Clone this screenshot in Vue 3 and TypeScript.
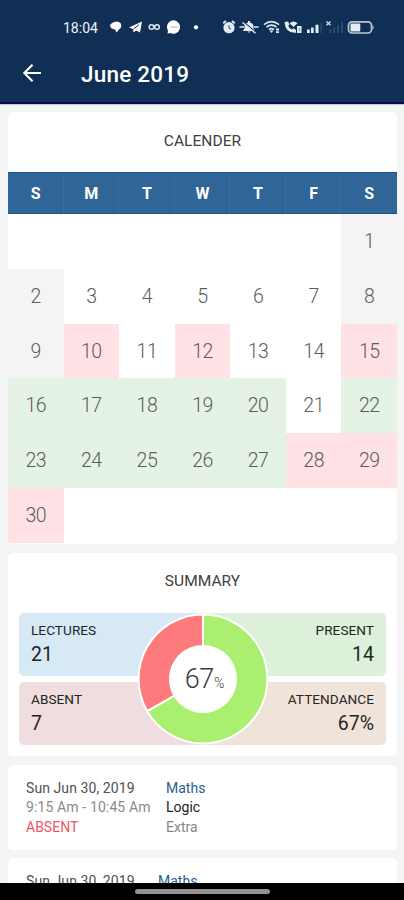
<script setup lang="ts">
type DayState = 'none' | 'muted' | 'absent' | 'present'

interface Day {
  key: string
  label: string
  state: DayState
}

interface LectureEntry {
  date: string
  time: string
  status: string
  subject: string
  topic: string
  kind: string
}

const weekdays: string[] = ['S', 'M', 'T', 'W', 'T', 'F', 'S']

const absentDays = new Set<number>([10, 12, 15, 28, 29, 30])
const presentDays = new Set<number>([16, 17, 18, 19, 20, 22, 23, 24, 25, 26, 27])
const mutedDays = new Set<number>([1, 2, 8, 9])

function stateOf(n: number): DayState {
  if (absentDays.has(n)) return 'absent'
  if (presentDays.has(n)) return 'present'
  return mutedDays.has(n) ? 'muted' : 'none'
}

const leadingBlanks = 6
const days: Day[] = Array.from({ length: leadingBlanks + 30 }, (_, i): Day => {
  const n = i - leadingBlanks + 1
  return n < 1
    ? { key: `blank-${i}`, label: '', state: 'none' }
    : { key: `day-${n}`, label: String(n), state: stateOf(n) }
})

const entries: LectureEntry[] = [
  { date: 'Sun Jun 30, 2019', time: '9:15 Am - 10:45 Am', status: 'ABSENT', subject: 'Maths', topic: 'Logic', kind: 'Extra' },
  { date: 'Sun Jun 30, 2019', time: '', status: '', subject: 'Maths', topic: '', kind: '' },
]
</script>

<template>
  <div class="screen">
    <header class="header">
      <div class="status">
        <span class="clock">18:04</span>
        <svg class="left-icons" width="92" height="18" viewBox="0 0 92 18" fill="#fff">
          <path d="M3 5 Q8 2 11.5 5 Q13.5 9 10.5 11 L7.5 14.5 L6 11.5 Q1 11 1 7 Z" />
          <path d="M20 9.5 L33 3.5 L31 14.5 L27 12.5 L24.5 14.5 L24 11 Z" />
          <path d="M24.5 11 L30 6.5" stroke="#0f3054" stroke-width="1" />
          <g fill="none" stroke="#dde7f2" stroke-width="1.5">
            <circle cx="42.5" cy="9" r="2.3" /><circle cx="48" cy="9" r="2.3" />
          </g>
          <path d="M65 2.2 A6.9 6.8 0 1 1 61 15 L58.5 15.5 L59 12.5 A6.9 6.8 0 0 1 65 2.2 Z" />
          <path d="M61.5 9.3 L64 8.7 L66 9.4 L69 8.8" stroke="#a9b8c8" fill="none" stroke-width="1" />
          <circle cx="87" cy="9.3" r="2.1" />
        </svg>
        <svg class="right-icons" width="154" height="18" viewBox="0 0 154 18" fill="#e4edf7">
          <circle cx="7" cy="9.7" r="5.6" />
          <path d="M1.2 5.3 L4 3 M10 3 L12.8 5.3" stroke="#e4edf7" stroke-width="1.9" />
          <path d="M7 7 V10 L9 11" fill="none" stroke="#3c5878" stroke-width="1.1" />
          <path d="M20.8 13 L22.5 10.5 V8 Q23 5 26 4.5 V3 H28 V4.5 Q31 5 31.5 8 V10.5 L33.2 13 Z M25.5 13.6 H28.6 Q27 15.7 25.5 13.6 Z" />
          <path d="M21.8 4.1 L33.8 14" stroke="#0f3054" stroke-width="1.2" />
          <path d="M20.5 4.5 L33.5 15.2 M17.5 9 H22 M32 9 H36.5" stroke="#e4edf7" stroke-width="1.4" />
          <g fill="none" stroke="#dce6f1" stroke-width="1.7">
            <path d="M42 6.7 Q49.5 .4 57 6.7" /><path d="M44.5 9.2 Q49.5 5.2 54.5 9.2" /><path d="M47 11.6 Q49.5 9.7 52 11.6" />
          </g>
          <path d="M47.5 12.5 L49.5 15 L51.5 12.5 Z M54 10.5 H57 V12.4 H54 Z M54 13.2 H57 V15 H54 Z" />
          <path d="M62.5 4 L66 3.5 L67.5 6.5 L66.2 8 Q67 10 70 11.5 L71.5 10.3 L74 12 V14.7 Q63.5 15.5 62.5 4 Z" />
          <path d="M67.5 5.3 Q71.5 1.8 75.5 5.3 L71.5 9 Z M75 8 H79.5 V15 H75 Z" />
          <path d="M76.7 9.7 H78 V13.3 H76.7 Z" fill="#8fa2b9" />
          <path d="M85 11.5 H87.7 V15 H85 Z M89 9.5 H91.7 V15 H89 Z M93.5 6.7 H96.5 V15 H93.5 Z" />
          <path d="M98.5 4 H100 V15 H98.5 Z M107 11.5 H109.3 V15 H107 Z M111 9.5 H113 V15 H111 Z M115 7 H117 V15 H115 Z M119 4 H121 V15 H119 Z" fill="#2a4a70" />
          <path d="M104.5 3.5 L108.5 7.3 M108.5 3.5 L104.5 7.3" stroke="#c8ddef" stroke-width="1.3" />
          <rect x="126.5" y="3.8" width="23" height="11.2" rx="3.6" fill="none" stroke="#b9c5d3" stroke-width="1.7" />
          <rect x="128.5" y="5.4" width="9.8" height="8" rx="1" />
          <path d="M150.5 7 Q153 9.3 150.5 12 Z" fill="#b9c5d3" />
        </svg>
      </div>
      <div class="title-bar">
        <svg class="back" width="20" height="20" viewBox="0 0 20 20" fill="none" stroke="#fff" stroke-width="2.1">
          <path d="M19 10 H2.6 M10.5 1.8 L2.3 10 L10.5 18.2" />
        </svg>
        <h1 class="title">June 2019</h1>
      </div>
    </header>

    <main class="content">
      <section class="card calendar">
        <h2 class="card-title">CALENDER</h2>
        <div class="weekdays">
          <span v-for="(name, i) in weekdays" :key="i" class="weekday">{{ name }}</span>
        </div>
        <div class="days">
          <span v-for="day in days" :key="day.key" class="day" :class="day.state">{{ day.label }}</span>
        </div>
      </section>

      <section class="card summary">
        <h2 class="card-title">SUMMARY</h2>
        <div class="tiles">
          <div class="tile lectures"><span class="tile-label">LECTURES</span><span class="tile-value">21</span></div>
          <div class="tile right presents"><span class="tile-label">PRESENT</span><span class="tile-value">14</span></div>
          <div class="tile absents"><span class="tile-label">ABSENT</span><span class="tile-value">7</span></div>
          <div class="tile right attendance"><span class="tile-label">ATTENDANCE</span><span class="tile-value">67%</span></div>
          <div class="donut">
            <svg width="132" height="132" viewBox="-66 -66 132 132">
              <circle r="33" fill="#fff" />
              <path d="M0 -64.4 A64.4 64.4 0 1 1 -55.8 32.2 L-28.6 16.5 A33 33 0 1 0 0 -33 Z" fill="#aaef70" stroke="#fff" stroke-width="2" />
              <path d="M-55.8 32.2 A64.4 64.4 0 0 1 0 -64.4 L0 -33 A33 33 0 0 0 -28.6 16.5 Z" fill="#fd7b7c" stroke="#fff" stroke-width="2" />
            </svg>
            <div class="donut-label"><span class="percent">67</span><span class="sign">%</span></div>
          </div>
        </div>
      </section>

      <article v-for="(entry, i) in entries" :key="i" class="card entry" :class="{ compact: !entry.time }">
        <div class="when">
          <span class="date">{{ entry.date }}</span>
          <span class="time">{{ entry.time }}</span>
          <span class="absence">{{ entry.status }}</span>
        </div>
        <div class="what">
          <span class="subject">{{ entry.subject }}</span>
          <span class="topic">{{ entry.topic }}</span>
          <span class="kind">{{ entry.kind }}</span>
        </div>
      </article>
    </main>

    <footer class="nav-bar"><span class="handle"></span></footer>
  </div>
</template>

<style>
body {
  background: #f4f4f4;
}
</style>

<style scoped>
.screen {
  display: flex;
  flex-direction: column;
  width: 404px;
  height: 900px;
  overflow: hidden;
  box-sizing: border-box;
  background: #f4f4f4;
  font-family: Roboto, "Liberation Sans", sans-serif;
}
.header {
  flex: none;
  height: 104px;
  box-sizing: border-box;
  background: #0f3054;
  border-bottom: 2px solid #070b4b;
  box-shadow: 0 1px 1px #c6c8dc;
}
.status {
  display: flex;
  align-items: center;
  height: 18px;
  padding: 18px 0 0 63px;
}
.clock {
  width: 46px;
  margin-top: 1px;
  color: #f2f6fb;
  font-size: 14px;
  line-height: 18px;
  white-space: nowrap;
}
.left-icons {
  flex: none;
}
.right-icons {
  flex: none;
  margin-left: 21px;
}
.title-bar {
  display: flex;
  align-items: center;
  height: 40px;
  padding: 17px 0 0 22px;
}
.back {
  flex: none;
}
.title {
  margin: 1px 0 0 39px;
  color: #fff;
  font-size: 22.5px;
  font-weight: 500;
  line-height: 28px;
  letter-spacing: 0.2px;
}
.content {
  display: flex;
  flex: 1;
  flex-direction: column;
  gap: 8.5px;
  min-height: 0;
  padding: 8px 7px 0 8px;
  overflow: hidden;
}
.card {
  flex: none;
  box-sizing: border-box;
  border-radius: 5px;
  background: #fff;
}
.card-title {
  margin: 0;
  color: #404040;
  font-size: 15.5px;
  font-weight: 400;
  line-height: 20px;
  letter-spacing: 0.05px;
  text-align: center;
}
.calendar {
  height: 432px;
  padding-top: 19px;
}
.weekdays {
  display: grid;
  grid-template-columns: repeat(7, 1fr);
  height: 42px;
  margin-top: 21px;
  box-sizing: border-box;
  border-top: 1px solid #1c578c;
  border-bottom: 1px solid #1c578c;
  background: #306598;
}
.weekday {
  color: #fff;
  font-size: 16px;
  font-weight: 700;
  line-height: 41px;
  text-align: center;
}
.weekday + .weekday {
  box-shadow: -1px 0 #3b6e9f;
}
.days {
  display: grid;
  grid-template-columns: repeat(7, 1fr);
  grid-auto-rows: 54.8px;
}
.day {
  color: #5c5c5c;
  font-size: 19.5px;
  font-weight: 300;
  line-height: 55px;
  letter-spacing: -0.5px;
  text-align: center;
}
.muted {
  background: #f4f4f4;
}
.absent {
  background: #ffe2e6;
}
.present {
  background: #e5f3e5;
}
.summary {
  height: 203.5px;
  padding: 18px 11px 0;
}
.tiles {
  position: relative;
  display: grid;
  grid-template-columns: 1fr 1fr;
  grid-auto-rows: 63px;
  row-gap: 6px;
  margin-top: 22.5px;
}
.tile {
  display: flex;
  flex-direction: column;
  padding: 8px 12px 0;
  color: #252525;
}
.right {
  align-items: flex-end;
}
.lectures {
  border-radius: 5px 0 0 5px;
  background: #d6e9f5;
}
.presents {
  border-radius: 0 5px 5px 0;
  background: #ddf0d9;
}
.absents {
  border-radius: 5px 0 0 5px;
  background: #efdde0;
}
.attendance {
  border-radius: 0 5px 5px 0;
  background: #f0e4da;
}
.tile-label {
  font-size: 13.6px;
  line-height: 18px;
  letter-spacing: 0.05px;
}
.tile-value {
  margin-top: 4px;
  font-size: 19.5px;
  line-height: 24px;
}
.donut {
  position: absolute;
  top: 0;
  left: 50%;
  width: 132px;
  height: 132px;
  transform: translateX(-50%);
}
.donut svg {
  display: block;
}
.donut-label {
  position: absolute;
  inset: 0;
  display: flex;
  align-items: baseline;
  justify-content: center;
  padding-left: 4px;
  color: #3c3c3c;
  font-weight: 300;
  line-height: 132px;
}
.percent {
  font-size: 27px;
  letter-spacing: -0.3px;
}
.sign {
  font-size: 14px;
}
.entry {
  display: flex;
  height: 85px;
  padding: 13px 18px 0;
  font-size: 14px;
  line-height: 19.5px;
}
.when,
.what {
  display: flex;
  flex-direction: column;
  padding-top: 1px;
  white-space: nowrap;
}
.when {
  width: 140px;
}
.compact .when {
  width: 132px;
}
.date {
  color: #505050;
  letter-spacing: 0.08px;
}
.time {
  color: #8a8a8a;
  letter-spacing: 0.12px;
}
.absence {
  color: #f25561;
}
.subject {
  color: #285f91;
}
.topic {
  color: #252525;
}
.kind {
  color: #858585;
}
.nav-bar {
  display: flex;
  flex: none;
  justify-content: center;
  height: 17px;
  background: #000;
}
.handle {
  width: 135px;
  height: 5px;
  margin-top: 6px;
  border-radius: 3px;
  background: #929292;
}
</style>
